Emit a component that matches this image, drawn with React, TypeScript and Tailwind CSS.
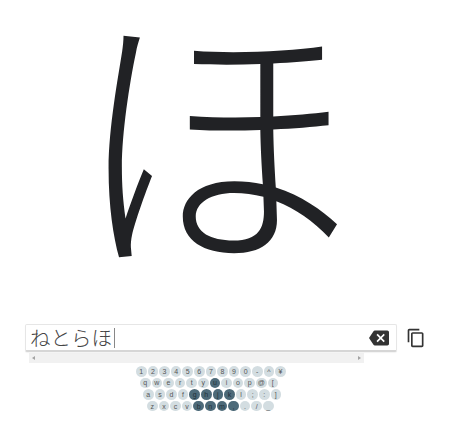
const rows = [
  { keys: ['1', '2', '3', '4', '5', '6', '7', '8', '9', '0', '-', '^', '¥'], pad: 'pl-[136px]' },
  { keys: ['q', 'w', 'e', 'r', 't', 'y', 'u', 'i', 'o', 'p', '@', '['], pad: 'pl-[140px]' },
  { keys: ['a', 's', 'd', 'f', 'g', 'h', 'j', 'k', 'l', ';', ':', ']'], pad: 'pl-[143px]' },
  { keys: ['z', 'x', 'c', 'v', 'b', 'n', 'm', ',', '.', '/', '_'], pad: 'pl-[147px]' },
];

const active = ['u', 'g', 'h', 'j', 'k', 'b', 'n', 'm', ','];

function Key({ label }: { label: string }) {
  const on = active.includes(label);
  return (
    <div
      className={
        'w-[10.6px] h-[10.6px] rounded-full flex items-center justify-center text-[7px] leading-none ' +
        (on ? 'bg-[#4d6a79] text-[#22303a]' : 'bg-[#d3dde1] text-[#555]')
      }
    >
      {label}
    </div>
  );
}

export default function App() {
  return (
    <div className="w-[450px] h-[424px] bg-white overflow-hidden font-['Liberation_Sans','Noto_Sans_CJK_JP',sans-serif]">
      {/* big character */}
      <div className="h-[324px] flex justify-center pt-[10px] pr-[23px]">
        <span className="text-[282px] leading-[232px] h-[232px] text-[#212225] font-light font-['Noto_Sans_CJK_JP',sans-serif]">ほ</span>
      </div>

      {/* input row */}
      <div className="flex items-center pl-[25px]">
        <div className="w-[372px] h-[28px] flex items-center justify-between rounded-[2px] border border-[#e6e6e6] border-b-2 border-b-[#d6d6d6] bg-white pl-[4px] pr-[7px] shadow-[0_1px_1px_rgba(0,0,0,0.05)]">
          <div className="flex items-center">
            <span className="text-[20.5px] leading-none text-[#444] font-light font-['Noto_Sans_CJK_JP',sans-serif]">ねとらほ</span>
            <div className="w-[1px] h-[20px] bg-[#888] ml-[2px]" />
          </div>
          <svg width="20" height="20" viewBox="0 0 24 24" fill="#333">
            <path d="M22 3H7c-.69 0-1.23.35-1.59.88L0 12l5.41 8.11c.36.53.9.89 1.59.89h15c1.1 0 2-.9 2-2V5c0-1.1-.9-2-2-2zm-3 12.59L17.59 17 14 13.41 10.41 17 9 15.59 12.59 12 9 8.41 10.41 7 14 10.59 17.59 7 19 8.41 15.41 12 19 15.59z" />
          </svg>
        </div>
        <svg className="ml-[9px]" width="20" height="20" viewBox="0 0 24 24" fill="#333">
          <path d="M16 1H4c-1.1 0-2 .9-2 2v14h2V3h12V1zm3 4H8c-1.1 0-2 .9-2 2v14c0 1.1.9 2 2 2h11c1.1 0 2-.9 2-2V7c0-1.1-.9-2-2-2zm0 16H8V7h11v14z" />
        </svg>
      </div>

      {/* scrollbar */}
      <div className="ml-[29px] mt-[1px] w-[335px] h-[10px] bg-[#f1f1f1] flex items-center justify-between px-[3px]">
        <div className="w-0 h-0 border-y-[2.5px] border-y-transparent border-r-[3px] border-r-[#a3a3a3]" />
        <div className="w-0 h-0 border-y-[2.5px] border-y-transparent border-l-[3px] border-l-[#a3a3a3]" />
      </div>

      {/* keyboard */}
      <div className="mt-[3px] flex flex-col gap-[1px]">
        {rows.map((row) => (
          <div key={row.keys[0]} className={'flex gap-[1px] ' + row.pad}>
            {row.keys.map((k) => (
              <Key key={k} label={k} />
            ))}
          </div>
        ))}
      </div>
    </div>
  );
}
